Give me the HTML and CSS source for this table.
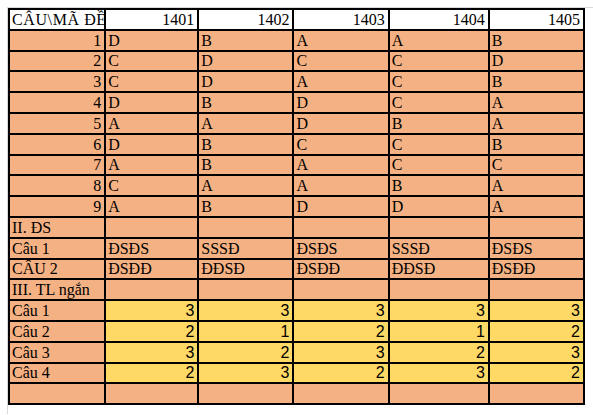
FILE: index.html
```html
<!DOCTYPE html>
<html lang="vi">
<head>
	<meta charset="utf-8" />
	<title>Đáp án</title>
	<link rel="stylesheet" href="styles.css">
</head>
<body>
	<div class="sheet">
		<table class="answers">
			<colgroup>
				<col class="c-label">
				<col class="c-a">
				<col class="c-b">
				<col class="c-c">
				<col class="c-d">
				<col class="c-e">
			</colgroup>
			<tr class="head">
				<td class="corner">CÂU\MÃ ĐỀ</td>
				<td class="num">1401</td>
				<td class="num">1402</td>
				<td class="num">1403</td>
				<td class="num">1404</td>
				<td class="num">1405</td>
			</tr>
			<tr><td class="num">1</td><td>D</td><td>B</td><td>A</td><td>A</td><td>B</td></tr>
			<tr><td class="num">2</td><td>C</td><td>D</td><td>C</td><td>C</td><td>D</td></tr>
			<tr><td class="num">3</td><td>C</td><td>D</td><td>A</td><td>C</td><td>B</td></tr>
			<tr><td class="num">4</td><td>D</td><td>B</td><td>D</td><td>C</td><td>A</td></tr>
			<tr><td class="num">5</td><td>A</td><td>A</td><td>D</td><td>B</td><td>A</td></tr>
			<tr><td class="num">6</td><td>D</td><td>B</td><td>C</td><td>C</td><td>B</td></tr>
			<tr><td class="num">7</td><td>A</td><td>B</td><td>A</td><td>C</td><td>C</td></tr>
			<tr><td class="num">8</td><td>C</td><td>A</td><td>A</td><td>B</td><td>A</td></tr>
			<tr><td class="num">9</td><td>A</td><td>B</td><td>D</td><td>D</td><td>A</td></tr>
			<tr><td>II. ĐS</td><td></td><td></td><td></td><td></td><td></td></tr>
			<tr><td>Câu 1</td><td>ĐSĐS</td><td>SSSĐ</td><td>ĐSĐS</td><td>SSSĐ</td><td>ĐSĐS</td></tr>
			<tr><td>CÂU 2</td><td>ĐSĐĐ</td><td>ĐĐSĐ</td><td>ĐSĐĐ</td><td>ĐĐSĐ</td><td>ĐSĐĐ</td></tr>
			<tr><td>III. TL ngắn</td><td></td><td></td><td></td><td></td><td></td></tr>
			<tr class="short"><td>Câu 1</td><td>3</td><td>3</td><td>3</td><td>3</td><td>3</td></tr>
			<tr class="short"><td>Câu 2</td><td>2</td><td>1</td><td>2</td><td>1</td><td>2</td></tr>
			<tr class="short"><td>Câu 3</td><td>3</td><td>2</td><td>3</td><td>2</td><td>3</td></tr>
			<tr class="short"><td>Câu 4</td><td>2</td><td>3</td><td>2</td><td>3</td><td>2</td></tr>
			<tr><td></td><td></td><td></td><td></td><td></td><td></td></tr>
		</table>
	</div>
</body>
</html>
```

FILE: styles.css
```css
body{
	margin: 0;
	padding: 0;
	background: #fff;
}

.sheet{
	margin: 7px 0 0 7px;
	border-top: 1px solid #d9d9d9;
	border-left: 1px solid #d9d9d9;
	height: 407px;
	box-sizing: border-box;
}

table.answers{
	border-collapse: separate;
	border-spacing: 0;
	table-layout: fixed;
	width: 577px;
	font: 16px "Liberation Serif", "Times New Roman", serif;
	color: #000;
}

col.c-label{ width: 98px; }
col.c-a{ width: 93px; }
col.c-b{ width: 95px; }
col.c-c{ width: 95px; }
col.c-d{ width: 100px; }
col.c-e{ width: 95px; }

table.answers td{
	box-sizing: border-box;
	height: 20.8px;
	padding: 0 3px 0 2px;
	background: #f4b183;
	border-right: 2px solid #000;
	border-bottom: 2px solid #000;
	vertical-align: bottom;
	white-space: nowrap;
	overflow: hidden;
	line-height: 18px;
}

table.answers td:first-child{
	border-left: 2px solid #000;
}

table.answers tr.head td{
	border-top: 2px solid #000;
	height: 22.8px;
	background: #fff;
	text-overflow: clip;
}

/* label spills past the column edge in the sheet, so it gets cut */
table.answers td.corner{
	padding-right: 0;
	letter-spacing: 0.6px;
}

table.answers td.num{
	text-align: right;
}

table.answers tr.short td + td{
	background: #ffd966;
	text-align: right;
	font-family: "Liberation Sans", Arial, sans-serif;
}
```
